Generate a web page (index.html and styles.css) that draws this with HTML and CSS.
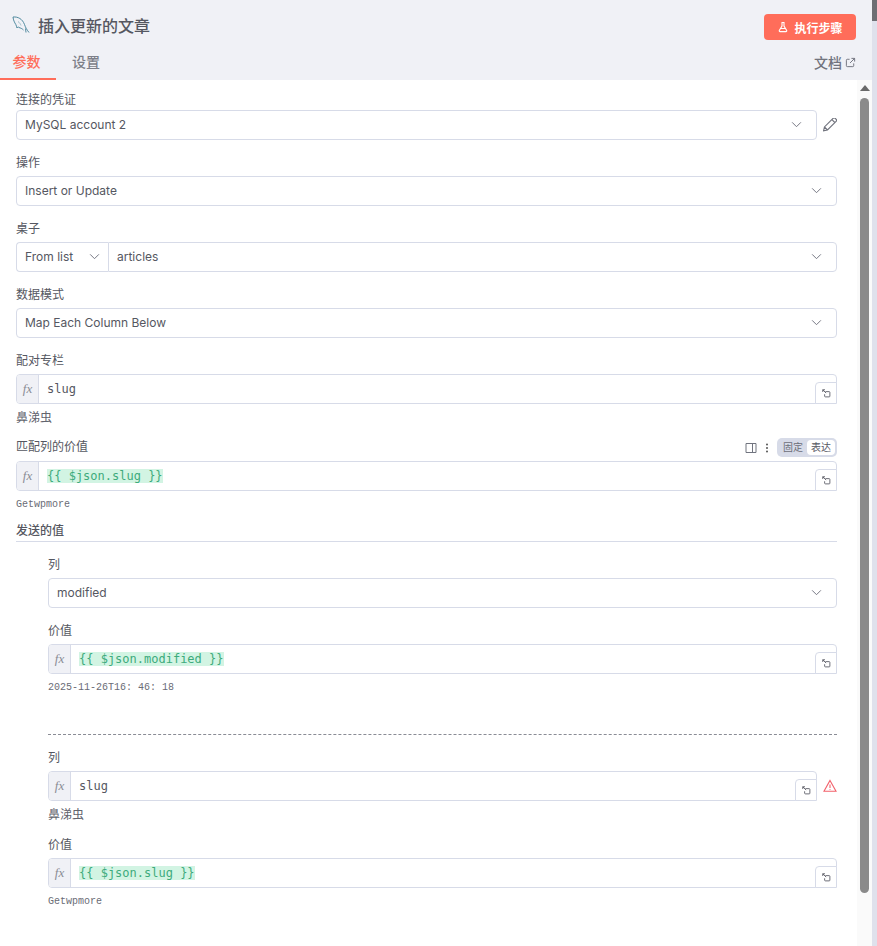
FILE: index.html
```html
<!DOCTYPE html>
<html lang="zh">
<head>
<meta charset="utf-8">
<title>插入更新的文章</title>
<link rel="stylesheet" href="styles.css">
</head>
<body>
<div class="panel">
  <header class="head">
    <div class="title-row">
      <svg class="logo" viewBox="0 0 18 18" width="18" height="18"><path d="M1 1C6 .5 10.500 3 12.500 8.500C13.500 11.500 15 14 17 16.500M1 1C1.300 4 2.500 6.500 3.800 8.500C4.500 9.800 4.500 10.500 5 12C5.500 11 6.500 10.800 7 11.500C8.500 12 10 12.500 11.500 14M13.500 12.500L14 16.500" fill="none" stroke="#3f7f95" stroke-width="0.900"/><path d="M6 5.500C7.500 6.500 8.500 8 9 9.500" fill="none" stroke="#8fb3bf" stroke-width="0.800"/></svg>
      <h1 class="title">插入更新的文章</h1>
      <button class="run">
        <svg viewBox="0 0 12 12" width="12" height="12"><path d="M4.500 1.500h3M5 1.500v3.500L2.300 9.500a.8.8 0 0 0 .7 1.100h6a.8.8 0 0 0 .7-1.100L7 5V1.500M3.800 7.500h4.400" fill="none" stroke="#fff" stroke-width="1.100"/></svg>
        执行步骤
      </button>
    </div>
    <nav class="tabs">
      <a class="tab active">参数</a>
      <a class="tab">设置</a>
      <a class="docs">文档<svg viewBox="0 0 12 12" width="11" height="11"><path d="M9.500 7v2.500a1 1 0 0 1-1 1h-6a1 1 0 0 1-1-1v-6a1 1 0 0 1 1-1H5M7 1.500h3.500V5M10.500 1.500L5.500 6.500" fill="none" stroke="#6b6d78" stroke-width="1"/></svg></a>
    </nav>
  </header>

  <div class="body">
    <main class="form">
      <section class="field">
        <label class="label label-first">连接的凭证</label>
        <div class="with-side">
          <div class="select"><span>MySQL account 2</span><svg class="chev" viewBox="0 0 12 8" width="11" height="7"><path d="M1 1.500l5 5 5-5" fill="none" stroke="#71747f" stroke-width="1.100"/></svg></div>
          <svg class="side-icon" viewBox="2 2 12.500 12.500" width="14" height="14"><path d="M2.500 13.500l.8-3.500 7.700-7.700a1.300 1.300 0 0 1 1.900 0l.8.8a1.300 1.300 0 0 1 0 1.900L6 12.700zM3.300 10l2.700 2.700M10 3.500l2.500 2.500" fill="none" stroke="#71737d" stroke-width="1"/></svg>
        </div>
      </section>

      <section class="field">
        <label class="label">操作</label>
        <div class="select"><span>Insert or Update</span><svg class="chev" viewBox="0 0 12 8" width="11" height="7"><path d="M1 1.500l5 5 5-5" fill="none" stroke="#71747f" stroke-width="1.100"/></svg></div>
      </section>

      <section class="field">
        <label class="label">桌子</label>
        <div class="select-pair">
          <div class="select mode"><span>From list</span><svg class="chev" viewBox="0 0 12 8" width="11" height="7"><path d="M1 1.500l5 5 5-5" fill="none" stroke="#71747f" stroke-width="1.100"/></svg></div>
          <div class="select table"><span>articles</span><svg class="chev" viewBox="0 0 12 8" width="11" height="7"><path d="M1 1.500l5 5 5-5" fill="none" stroke="#71747f" stroke-width="1.100"/></svg></div>
        </div>
      </section>

      <section class="field">
        <label class="label">数据模式</label>
        <div class="select"><span>Map Each Column Below</span><svg class="chev" viewBox="0 0 12 8" width="11" height="7"><path d="M1 1.500l5 5 5-5" fill="none" stroke="#71747f" stroke-width="1.100"/></svg></div>
      </section>

      <section class="field">
        <label class="label">配对专栏</label>
        <div class="expr">
          <i class="fx">fx</i>
          <code class="code">slug</code>
          <span class="corner"><svg viewBox="0 0 12 12" width="9" height="9"><use href="#pop"/></svg></span>
        </div>
        <p class="hint-cjk">鼻涕虫</p>
      </section>

      <section class="field field-tight">
        <div class="label-row">
          <label class="label label-inline">匹配列的价值</label>
          <div class="tools">
            <svg viewBox="0 0 12 12" width="12" height="12"><path d="M1 1.500h10v9H1zM7.500 1.500v9" fill="none" stroke="#71747f" stroke-width="1"/></svg>
            <svg viewBox="0 0 4 12" width="4" height="12"><circle cx="2" cy="2.500" r="1" fill="#555"/><circle cx="2" cy="6" r="1" fill="#555"/><circle cx="2" cy="9.500" r="1" fill="#555"/></svg>
            <div class="switch"><span class="opt">固定</span><span class="opt on">表达</span></div>
          </div>
        </div>
        <div class="expr">
          <i class="fx">fx</i>
          <code class="code"><mark class="res">{{ $json.slug }}</mark></code>
          <span class="corner"><svg viewBox="0 0 12 12" width="9" height="9"><use href="#pop"/></svg></span>
        </div>
        <p class="hint-mono">Getwpmore</p>
      </section>

      <h2 class="section-title">发送的值</h2>

      <div class="collection">
        <section class="field">
          <label class="label">列</label>
          <div class="select"><span>modified</span><svg class="chev" viewBox="0 0 12 8" width="11" height="7"><path d="M1 1.500l5 5 5-5" fill="none" stroke="#71747f" stroke-width="1.100"/></svg></div>
        </section>
        <section class="field">
          <label class="label">价值</label>
          <div class="expr">
            <i class="fx">fx</i>
            <code class="code"><mark class="res">{{ $json.modified }}</mark></code>
            <span class="corner"><svg viewBox="0 0 12 12" width="9" height="9"><use href="#pop"/></svg></span>
          </div>
          <p class="hint-mono">2025-11-26T16: 46: 18</p>
        </section>

        <hr class="dash">

        <section class="field">
          <label class="label">列</label>
          <div class="with-side">
            <div class="expr">
              <i class="fx">fx</i>
              <code class="code">slug</code>
              <span class="corner"><svg viewBox="0 0 12 12" width="9" height="9"><use href="#pop"/></svg></span>
            </div>
            <svg class="side-icon warn" viewBox="0 0 14 14" width="14" height="14"><path d="M7 1.500L13 12.300H1zM7 5.500v3.500M7 10.200v.8" fill="none" stroke="#f2616b" stroke-width="1.100"/></svg>
          </div>
          <p class="hint-cjk">鼻涕虫</p>
        </section>
        <section class="field field-close">
          <label class="label">价值</label>
          <div class="expr">
            <i class="fx">fx</i>
            <code class="code"><mark class="res">{{ $json.slug }}</mark></code>
            <span class="corner"><svg viewBox="0 0 12 12" width="9" height="9"><use href="#pop"/></svg></span>
          </div>
          <p class="hint-mono">Getwpmore</p>
        </section>
      </div>
    </main>

    <aside class="scroll">
      <span class="arrow"></span>
      <span class="thumb"></span>
    </aside>
  </div>
</div>
<div class="edge"><span class="edge-thumb"></span></div>

<svg class="defs" width="0" height="0">
  <symbol id="pop" viewBox="0 0 12 12"><path d="M4.500 3.500H9.500a1 1 0 0 1 1 1V9.500a1 1 0 0 1-1 1H4.500a1 1 0 0 1-1-1V7M1 1l4.500 4.500M1 4V1H4" fill="none" stroke="#5c5e68" stroke-width="1.200"/></symbol>
</svg>
</body>
</html>
```

FILE: styles.css
```css
* { box-sizing: border-box; }
html, body { height: 100%; }
body {
  margin: 0;
  display: flex;
  height: 946px;
  overflow: hidden;
  background: #dfe1ec;
  font-family: Inter, "Noto Sans CJK SC", sans-serif;
  color: #555761;
  font-size: 12px;
}
.panel { width: 872px; display: flex; flex-direction: column; background: #fff; }
.edge { width: 5px; }
.edge-thumb { display: block; width: 5px; height: 21px; background: #6d6e73; }
.defs { position: absolute; }

.head { height: 80px; background: #f0f1f6; padding: 14px 16px 0 0; display: flex; flex-direction: column; }
.title-row { display: flex; align-items: center; height: 26px; padding-left: 12px; }
.logo { flex: none; margin-top: -5px; }
.title { margin: -2px 0 0 8px; font-size: 16px; font-weight: 500; line-height: 26px; color: #555761; flex: 1; }
.run {
  display: flex; align-items: center; justify-content: center; gap: 5px;
  width: 92px; height: 26px; border: 0; border-radius: 4px;
  background: #ff6d5a; color: #fff; font: 600 12px Inter, "Noto Sans CJK SC", sans-serif;
}
.tabs { display: flex; align-items: flex-start; height: 40px; padding-top: 7px; }
.tab { width: 54px; height: 33px; padding-top: 5px; text-align: center; font-size: 14px; font-weight: 500; line-height: 20px; color: #7d7f89; margin-right: 6px; }
.tab.active { width: 56px; padding-right: 3px; margin-right: 4px; color: #ff6d5a; border-bottom: 2px solid #ff6d5a; }
.tab + .tab { padding-left: 12px; text-align: left; }
.docs { margin-left: auto; display: flex; align-items: center; gap: 3px; height: 20px; margin-top: 5px; font-size: 14px; font-weight: 500; color: #71737d; }

.body { flex: 1; display: flex; min-height: 0; }
.form { flex: 1; min-width: 0; padding: 10px 20px 0 16px; }
.scroll { width: 15px; background: #fafafa; position: relative; display: flex; flex-direction: column; align-items: center; }
.arrow { width: 0; height: 0; margin-top: 5px; border-left: 5px solid transparent; border-right: 5px solid transparent; border-bottom: 6px solid #6a6a6a; }
.thumb { width: 9px; height: 795px; margin-top: 7px; border-radius: 5px; background: #8a8a8a; }

.field { margin-bottom: 16px; }
.label { display: block; height: 20px; line-height: 14px; font-size: 12px; font-weight: 400; color: #555761; }
.label-first { line-height: 20px; }
.label-inline { margin-top: 3px; }
.label-row { display: flex; justify-content: space-between; align-items: flex-start; height: 24px; }
.field-tight { margin-top: -7px; margin-bottom: 9px; }
.field-close { margin-top: -3px; }

.select {
  flex: 1; min-width: 0; height: 30px; display: flex; align-items: center; justify-content: space-between;
  padding: 0 14px 1px 8px; border: 1px solid #d7dbe8; border-radius: 4px; background: #fff;
  font-size: 12px; color: #555761;
}
.with-side { display: flex; align-items: center; gap: 6px; }
.side-icon { flex: none; }
.select-pair { display: flex; }
.mode { flex: none; width: 92px; border-radius: 4px 0 0 4px; border-right: 0; padding-right: 8px; }
.table { border-radius: 0 4px 4px 0; padding-left: 8px; }

.expr {
  flex: 1; min-width: 0; position: relative; height: 30px; display: flex; align-items: center;
  border: 1px solid #d7dbe8; border-radius: 4px; background: #fff;
}
.fx {
  flex: none; width: 22px; height: 100%; display: flex; align-items: center; justify-content: center;
  background: #f0f1f6; border-right: 1px solid #d7dbe8; border-radius: 3px 0 0 3px;
  font: italic 13px "Liberation Serif", serif; color: #8a8c95;
}
.code { margin-left: 8px; font: 12px "DejaVu Sans Mono", monospace; color: #555761; }
.res { background: #d2f4e3; color: #3dab7c; }
.corner {
  position: absolute; right: -1px; bottom: -1px; width: 22px; height: 22px;
  display: flex; align-items: center; justify-content: center;
  background: #fff; border: 1px solid #d7dbe8; border-radius: 4px 0 0 0;
}
.hint-cjk { margin: 4px 0 0; height: 20px; line-height: 20px; font-size: 12px; color: #62646e; }
.hint-mono { margin: 6px 0 0; height: 16px; font: 10px/16px "Liberation Mono", monospace; color: #6a6c76; }

.tools { display: flex; align-items: center; gap: 8px; margin-top: 1px; margin-left: -1px; }
.switch { display: flex; align-items: center; height: 19px; padding: 2px; background: #d7dbe8; border-radius: 5px; font-size: 10px; }
.opt { line-height: 15px; color: #6c6e78; width: 28px; text-align: center; }
.opt.on { background: #fff; border-radius: 4px; color: #555761; }

.section-title { margin: 0 0 16px; height: 20px; line-height: 18px; font-size: 12px; font-weight: 500; color: #555761; border-bottom: 1px solid #d7dbe8; }
.collection { padding-left: 32px; }
.dash { margin: 38px 0 16px; border: 0; border-top: 1px dashed #8a8c95; }
```
